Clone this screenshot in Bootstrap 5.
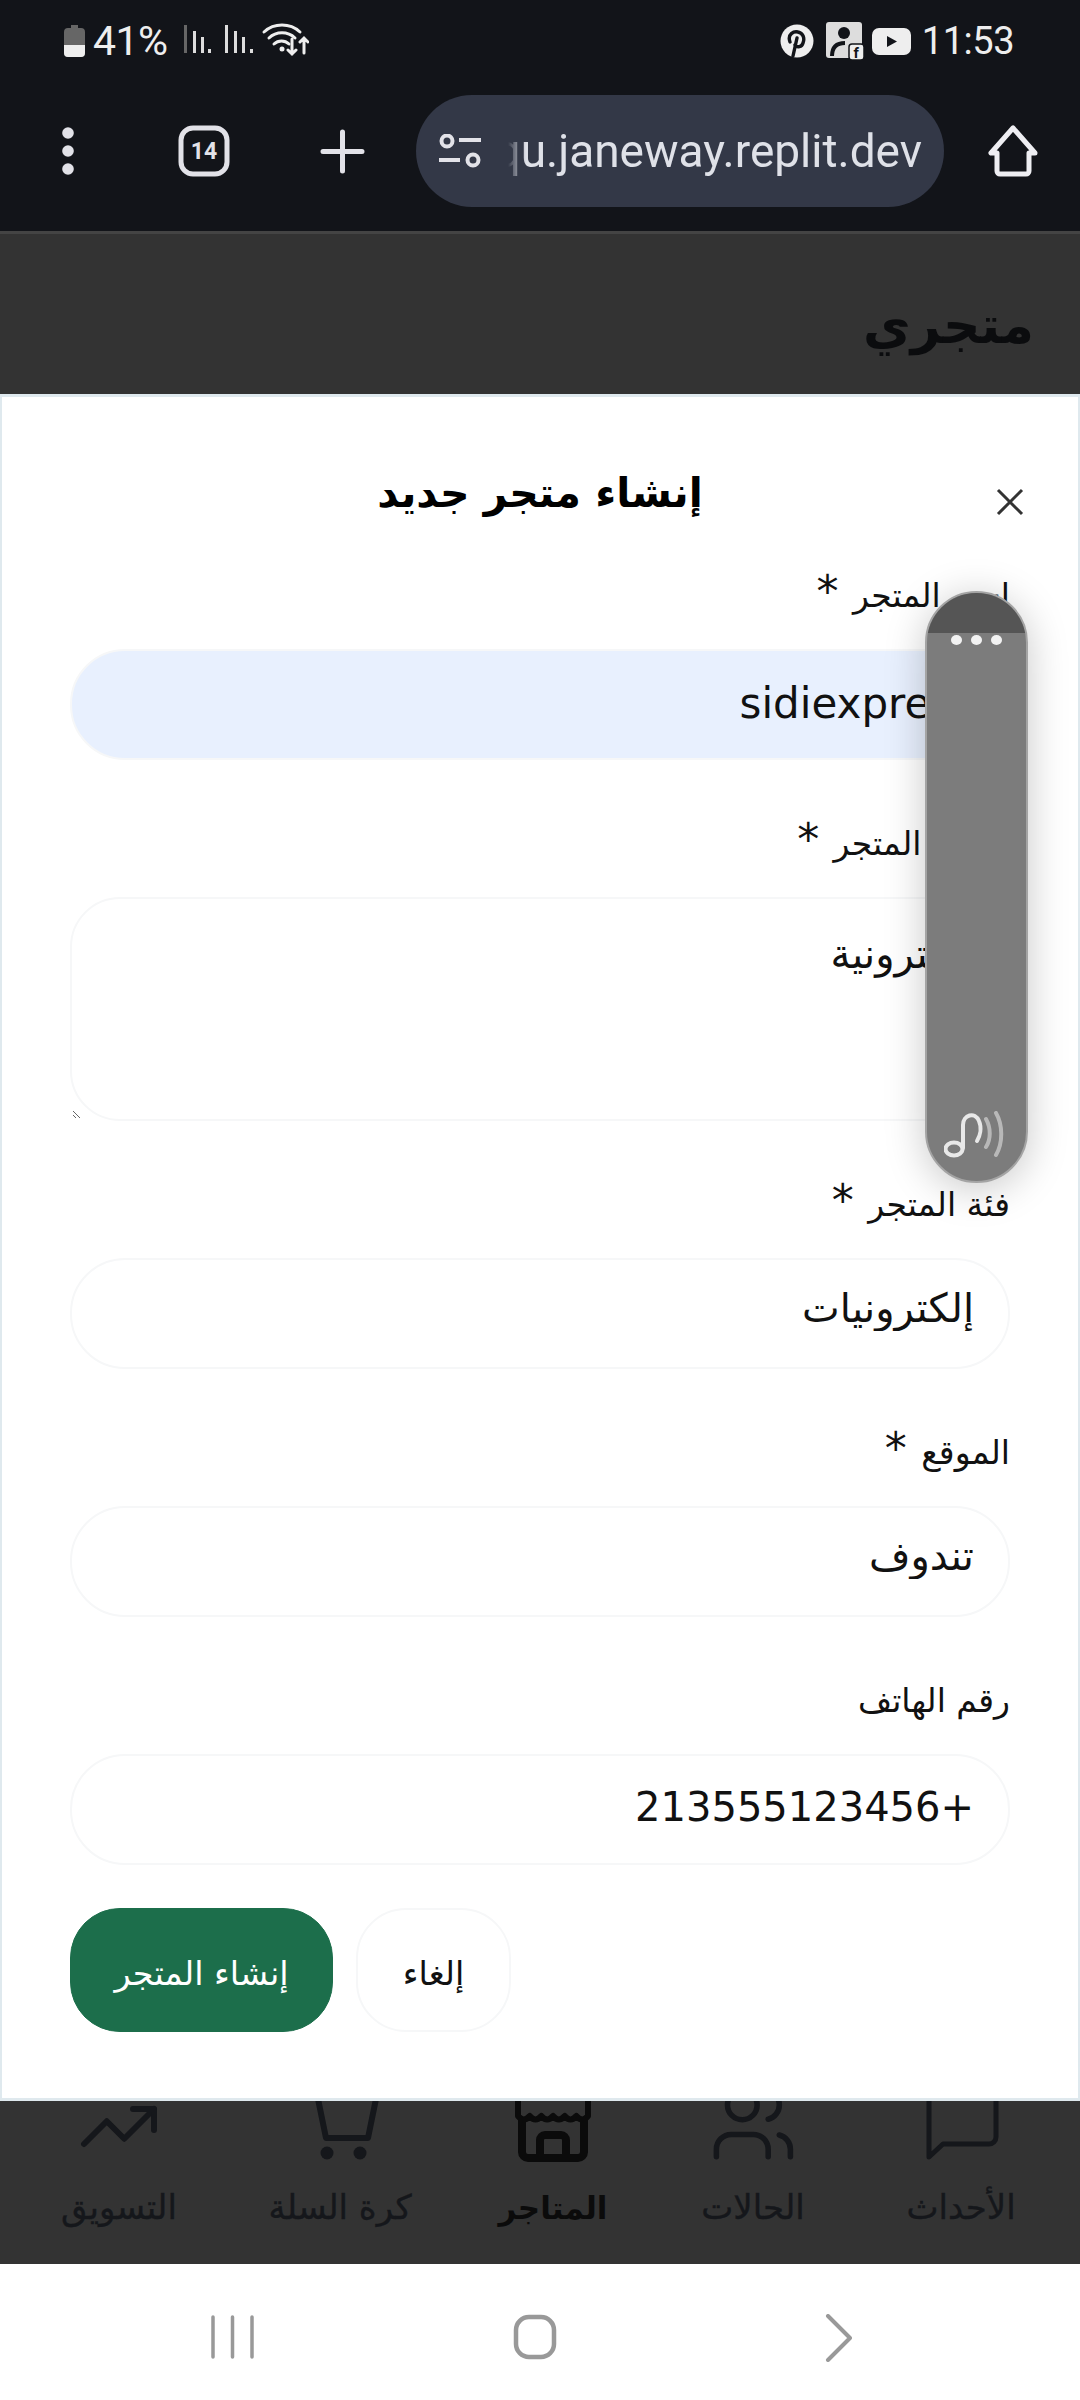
<!DOCTYPE html>
<html lang="ar">
<head>
  <meta charset="UTF-8">
  <meta name="viewport" content="width=device-width, initial-scale=1.0">
  <title>متجري</title>
  <link href="https://cdn.jsdelivr.net/npm/bootstrap@5.3.0/dist/css/bootstrap.min.css" rel="stylesheet">
  <style>
    body {
      width: 1080px;
      height: 2400px;
      overflow: hidden;
      background: #fff;
      font-family: "DejaVu Sans", sans-serif;
    }
    .phone-top { height: 234px; background: #121419; border-bottom: 3px solid #444; font-family: Roboto, sans-serif; color: #eee; }
    .status-row { height: 76px; padding: 6px 66px 0 64px; font-size: 38px; line-height: 36px; letter-spacing: -.5px; }
    .batt-pct { font-size: 41px; }
    .tool-row { height: 150px; padding-left: 62px; }
    .url-pill { width: 528px; height: 112px; border-radius: 56px; background: #333847; padding: 0 22px 0 23px; color: #dfe1e8; font-size: 46px; }
    .url-text { width: 414px; overflow: hidden; white-space: nowrap; justify-content: flex-end; -webkit-mask-image: linear-gradient(90deg, transparent, #000 18px); mask-image: linear-gradient(90deg, transparent, #000 18px); }
    .page-head { height: 160px; background: #333; padding: 46px 46px 0 0; }
    .page-title { font-size: 52px; line-height: 90px; font-weight: 700; color: #0b0c0e; margin: 0; }

    .sheet { height: 1707px; border: solid #dfe9ee; border-width: 3px 2px; border-radius: 0; background: #fff; color: #000; }
    .sheet-head { display: grid; grid-template-columns: 1fr auto 1fr; height: 169px; padding: 0 68px; align-items: center; }
    .sheet-title { font-size: 41px; font-weight: 700; margin: 24px 0 0; }
    .close-x { justify-self: start; width: 34px; height: 34px; padding: 0; margin: 40px -17px 0 0; border: 0; background: none; line-height: 0; }
    .sheet-form { padding: 0 68px; display: flex; flex-direction: column; gap: 54px; }
    .sheet-form .form-label { display: block; height: 60px; line-height: 60px; font-size: 33px; margin-bottom: 23px; color: #111; }
    .req-mark { font-size: 44px; line-height: 0; margin-right: 4px; }
    .sheet-form .form-control { height: 111px; border-radius: 55px; border: 2px solid #f6f7f8; padding: 0 34px 6px; font-size: 40px; color: #111; background: #fff; box-shadow: none; }
    .sheet-form .form-control.ar-value { padding-bottom: 12px; }
    .sheet-form .form-control.autofilled { background: #e8f0fe; font-size: 42px; padding-bottom: 2px; }
    .sheet-form textarea.form-control { height: 224px; border-radius: 50px; padding-top: 25px; line-height: 1.5; }
    .sheet-actions { gap: 23px; margin-top: 43px; padding: 0 68px; }
    .sheet-actions .btn { height: 124px; border-radius: 50px; font-size: 33.5px; padding: 9px 0 0; }
    .btn-create { width: 263px; background: #1c6e4b; border-color: #1c6e4b; color: #fff; }
    .btn-dismiss { width: 155px; background: #fff; border: 2px solid #f6f7f8; color: #111; }

    .float-pill { position: absolute; left: 925px; top: 591px; width: 103px; height: 592px; border-radius: 52px; background: #7c7c7c; border: 2px solid #a4a4a4; overflow: hidden; box-shadow: 0 6px 40px rgba(0,0,0,.22); }
    .pill-cap { height: 40px; background: #555; }
    .pill-dots { gap: 9px; padding-top: 2px; }
    .pill-dots i { width: 11px; height: 10px; border-radius: 50%; background: #f2f2f2; display: block; }
    .pill-note { position: absolute; left: 17px; bottom: 22px; }

    .tab-bar { height: 163px; overflow: hidden; background: #333; display: grid; grid-template-columns: 238px 178px 222px 204px 238px; }
    .tab-item { display: flex; flex-direction: column; align-items: center; color: #15171b; font-size: 34px; line-height: 48px; -webkit-text-stroke: .4px #15171b; }
    .tab-item svg { margin-top: -11px; margin-bottom: 13px; flex: none; }
    .tab-item.on { color: #0b0b0b; font-size: 31px; font-weight: 700; -webkit-text-stroke: 0; }
    .tab-item.on span { margin-top: 1px; }
    .sys-bar { height: 136px; background: #fff; padding-top: 50px; }
    .sys-bar svg { display: block; }
  </style>
</head>
<body>
  <!-- browser chrome -->
  <div class="phone-top">
    <div class="status-row d-flex align-items-center">
      <svg width="21" height="32" viewBox="0 0 21 32"><path d="M7 0h7v3h3a4 4 0 0 1 4 4v21a4 4 0 0 1-4 4H4a4 4 0 0 1-4-4V7a4 4 0 0 1 4-4h3z" fill="#666"/><path d="M0 20h21v8a4 4 0 0 1-4 4H4a4 4 0 0 1-4-4z" fill="#eee"/></svg>
      <span class="ms-2 batt-pct">41%</span>
      <svg class="ms-3" width="125" height="36" viewBox="0 0 125 36" fill="#ddd">
        <rect x="0" y="2" width="3" height="28" fill="#666"/><rect x="9" y="8" width="3" height="22"/><rect x="17" y="14" width="3" height="16"/><rect x="24" y="26" width="3" height="4"/>
        <rect x="41" y="2" width="3" height="28"/><rect x="50" y="8" width="3" height="22"/><rect x="58" y="14" width="3" height="16"/><rect x="66" y="26" width="3" height="4"/>
        <g fill="none" stroke="#eee" stroke-width="3" stroke-linecap="round"><path d="M80 9a27 27 0 0 1 36 0M85 15a19 19 0 0 1 26 0M90 21a11 11 0 0 1 15 0"/><path d="M108 16v15m-4-4 4 4 4-4M120 30V15m-4 4 4-4 4 4"/></g>
        <circle cx="98" cy="26" r="2.500" fill="#eee"/>
      </svg>
      <div class="ms-auto d-flex align-items-center">
        <svg width="34" height="34" viewBox="0 0 34 34"><circle cx="17" cy="17" r="16.500" fill="#eee"/><path d="M13 32l4-18M10 18c-3-8 4-11 8-10 5 1 7 6 5 11-1 4-6 5-8 2" fill="none" stroke="#121419" stroke-width="3.400" stroke-linecap="round"/></svg>
        <svg style="margin-left:12px" width="38" height="38" viewBox="0 0 38 38"><rect y="0" width="36" height="36" rx="3" fill="#ddd"/><circle cx="18" cy="11" r="6" fill="#121419"/><path d="M6 34c0-9 5-13 13-13" fill="none" stroke="#121419" stroke-width="4"/><rect x="23" y="22" width="15" height="16" rx="3" fill="#eee" stroke="#121419" stroke-width="1.500"/><text x="27.500" y="36" font-size="15" font-weight="700" font-family="Roboto, sans-serif" fill="#121419">f</text></svg>
        <svg class="ms-2" width="39" height="27" viewBox="0 0 39 27"><rect width="39" height="27" rx="7" fill="#eee"/><path d="M15 8v11l10-5.500z" fill="#121419"/></svg>
        <span style="margin-left:11px">11:53</span>
      </div>
    </div>
    <div class="tool-row d-flex align-items-center">
      <svg width="12" height="48" viewBox="0 0 12 48" fill="#e2e2e8"><circle cx="6" cy="6" r="5.800"/><circle cx="6" cy="24" r="5.800"/><circle cx="6" cy="42" r="5.800"/></svg>
      <svg style="margin-left:104px" width="52" height="52" viewBox="0 0 52 52"><rect x="3" y="3" width="46" height="46" rx="12" fill="none" stroke="#e2e2e8" stroke-width="5"/><text x="26" y="34" text-anchor="middle" font-size="23" font-weight="700" font-family="Roboto, sans-serif" fill="#e2e2e8">14</text></svg>
      <svg style="margin-left:90px" width="45" height="45" viewBox="0 0 45 45" stroke="#e2e2e8" stroke-width="5" stroke-linecap="round"><path d="M22.500 3v39M3 22.500h39"/></svg>
      <div class="url-pill d-flex align-items-center" style="margin-left:51px">
        <svg class="flex-shrink-0" width="43" height="34" viewBox="0 0 43 34" fill="none" stroke="#e2e2e8" stroke-width="4"><circle cx="8" cy="7" r="5.500"/><path d="M20 6h22M0 26h21"/><circle cx="34" cy="26" r="5.500"/></svg>
        <div class="url-text d-flex ms-auto">qu.janeway.replit.dev</div>
      </div>
      <svg style="margin-left:44px" width="50" height="52" viewBox="0 0 50 52" fill="none" stroke="#eeeef2" stroke-width="5" stroke-linejoin="round"><path d="M25 3L3 28h6v18a3 3 0 0 0 3 3h26a3 3 0 0 0 3-3V28h6z"/></svg>
    </div>
  </div>

  <div class="page-head" dir="rtl">
    <h1 class="page-title">متجري</h1>
  </div>

  <!-- modal sheet -->
  <div class="sheet" dir="rtl">
    <div class="sheet-head">
      <button class="close-x" type="button" aria-label="إغلاق">
        <svg width="30" height="30" viewBox="0 0 30 30" stroke="#333" stroke-width="3"><path d="M3 3l24 24M27 3L3 27"/></svg>
      </button>
      <h2 class="sheet-title">إنشاء متجر جديد</h2>
      <span></span>
    </div>
    <form class="sheet-form">
      <div>
        <label class="form-label">اسم المتجر <span class="req-mark">*</span></label>
        <input class="form-control autofilled" type="text" value="sidiexpress">
      </div>
      <div>
        <label class="form-label">وصف المتجر <span class="req-mark">*</span></label>
        <textarea class="form-control">إلكترونية</textarea>
      </div>
      <div>
        <label class="form-label">فئة المتجر <span class="req-mark">*</span></label>
        <input class="form-control ar-value" type="text" value="إلكترونيات">
      </div>
      <div>
        <label class="form-label">الموقع <span class="req-mark">*</span></label>
        <input class="form-control ar-value" type="text" value="تندوف">
      </div>
      <div>
        <label class="form-label">رقم الهاتف</label>
        <input class="form-control" type="text" value="+213555123456">
      </div>
    </form>
    <div class="sheet-actions d-flex justify-content-end">
      <button class="btn btn-dismiss" type="button">إلغاء</button>
      <button class="btn btn-create" type="button">إنشاء المتجر</button>
    </div>
  </div>

  <!-- bottom tabs, their tops run under the sheet -->
  <div class="tab-bar" dir="rtl">
    <div class="tab-item">
      <svg width="100" height="80" viewBox="0 0 100 80" fill="none" stroke="#15171b" stroke-width="5" stroke-linejoin="round"><path d="M18 0V67L32 54H78a7 7 0 0 0 7-7V0"/></svg>
      <span>الأحداث</span>
    </div>
    <div class="tab-item">
      <svg width="100" height="80" viewBox="0 0 100 80" fill="none" stroke="#15171b" stroke-linecap="round"><g transform="translate(6 -11) scale(3.7)" stroke-width="1.500"><path d="M16 21v-2a4 4 0 0 0-4-4H6a4 4 0 0 0-4 4v2"/><circle cx="9" cy="7" r="4"/><path d="M22 21v-2a4 4 0 0 0-3-3.870M16 3.130a4 4 0 0 1 0 7.750"/></g></svg>
      <span>الحالات</span>
    </div>
    <div class="tab-item on">
      <svg width="100" height="80" viewBox="0 0 100 80" fill="none" stroke="#0b0b0b" stroke-width="8" stroke-linejoin="round"><path d="M15 4H85V26q-5.800 7-11.700 0q-5.800 7-11.600 0q-5.800 7-11.700 0q-5.800 7-11.700 0q-5.800 7-11.600 0q-5.800 7-11.700 0z" stroke-width="6"/><path d="M19 30V62a6 6 0 0 0 6 6H75a6 6 0 0 0 6-6V30"/><path d="M37 68V50a5 5 0 0 1 5-5H58a5 5 0 0 1 5 5V68"/></svg>
      <span>المتاجر</span>
    </div>
    <div class="tab-item">
      <svg width="100" height="80" viewBox="0 0 100 80" fill="none" stroke="#15171b" stroke-width="6" stroke-linejoin="round"><path d="M27 4L36 48H78L87 4"/><circle cx="37" cy="63" r="6.500" fill="#15171b" stroke="none"/><circle cx="70" cy="63" r="6.500" fill="#15171b" stroke="none"/></svg>
      <span>كرة السلة</span>
    </div>
    <div class="tab-item">
      <svg width="100" height="80" viewBox="0 0 100 80" fill="none" stroke="#15171b" stroke-linecap="round" stroke-linejoin="round"><g transform="translate(8 -5.500) scale(3.5)" stroke-width="1.700"><path d="M22 7l-8.500 8.500-5-5L2 17"/><path d="M16 7h6v6"/></g></svg>
      <span>التسويق</span>
    </div>
  </div>

  <div class="sys-bar">
    <div class="d-flex">
      <svg style="margin-left:211px" width="44" height="46" viewBox="0 0 44 46" stroke="#999" stroke-width="3.500" stroke-linecap="round"><path d="M2 3v40M21.500 3v40M41 3v40"/></svg>
      <svg style="margin-left:258px" width="44" height="46" viewBox="0 0 44 46" fill="none" stroke="#999" stroke-width="4.500"><rect x="3" y="3" width="38" height="40" rx="13"/></svg>
      <svg style="margin-left:268px" width="28" height="48" viewBox="0 0 28 48" fill="none" stroke="#999" stroke-width="4" stroke-linecap="round" stroke-linejoin="round"><path d="M3 2l22 22L3 46"/></svg>
    </div>
  </div>

  <!-- floating music bubble from the phone -->
  <div class="float-pill">
    <div class="pill-cap"></div>
    <div class="pill-dots d-flex justify-content-center"><i></i><i></i><i></i></div>
    <svg class="pill-note" width="64" height="48" viewBox="0 0 64 48" fill="none" stroke="#e8e8e8" stroke-width="4" stroke-linecap="round"><ellipse cx="10" cy="38" rx="8.500" ry="6.500"/><path d="M19 37V14C19 4 31 0 35 10c3 7 1 15-2 20"/><path d="M42 8c5 9 5 20 0 28M52 2c7 12 7 30 0 42" stroke="#b8b8b8"/></svg>
  </div>

  <script src="https://cdn.jsdelivr.net/npm/bootstrap@5.3.0/dist/js/bootstrap.bundle.min.js"></script>
</body>
</html>
